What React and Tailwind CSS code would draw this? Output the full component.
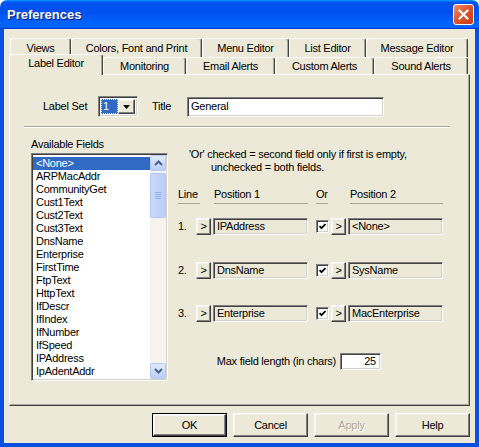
import React from "react";

const sunken =
  "border border-t-[#808080] border-l-[#808080] border-b-white border-r-white shadow-[inset_1px_1px_0_#404040,inset_-1px_-1px_0_#d4d0c8]";
const raised =
  "border border-t-white border-l-white border-b-[#404040] border-r-[#404040] shadow-[inset_-1px_-1px_0_#808080,inset_1px_1px_0_#f4f3ee]";

const fields = [
  "<None>",
  "ARPMacAddr",
  "CommunityGet",
  "Cust1Text",
  "Cust2Text",
  "Cust3Text",
  "DnsName",
  "Enterprise",
  "FirstTime",
  "FtpText",
  "HttpText",
  "IfDescr",
  "IfIndex",
  "IfNumber",
  "IfSpeed",
  "IPAddress",
  "IpAdentAddr",
  "IpAdentIfIndex",
];

const row1 = [
  ["Views", 61],
  ["Colors, Font and Print", 131],
  ["Menu Editor", 87],
  ["List Editor", 77],
  ["Message Editor", 102],
];

const row2 = [
  ["Label Editor", 94, true],
  ["Monitoring", 83],
  ["Email Alerts", 89],
  ["Custom Alerts", 99],
  ["Sound Alerts", 94],
];

const lines = [
  ["1.", "IPAddress", "<None>"],
  ["2.", "DnsName", "SysName"],
  ["3.", "Enterprise", "MacEnterprise"],
];

function Chevron({ down }) {
  return (
    <svg width="9" height="6" viewBox="0 0 9 6">
      <polyline
        points={down ? "1,1 4.5,4.5 8,1" : "1,5 4.5,1.5 8,5"}
        fill="none"
        stroke="#4d6185"
        strokeWidth="2"
      />
    </svg>
  );
}

function ScrollBar() {
  const btn =
    "h-[16px] rounded-[2px] border border-[#b4c8f6] bg-[linear-gradient(to_bottom,#e1eafe,#b9cdfa)] flex items-center justify-center";
  return (
    <div className="w-[16px] h-full bg-[#f4f3ee] flex flex-col">
      <div className={btn}>
        <Chevron />
      </div>
      <div className="mt-[2px] h-[45px] rounded-[2px] border border-[#b4c8f6] bg-[linear-gradient(to_right,#c9d8fc,#bacdf9)] flex flex-col items-center justify-center gap-[1px]">
        <div className="w-[6px] h-[1px] bg-[#8cb0f8]" />
        <div className="w-[6px] h-[1px] bg-[#8cb0f8]" />
        <div className="w-[6px] h-[1px] bg-[#8cb0f8]" />
        <div className="w-[6px] h-[1px] bg-[#8cb0f8]" />
      </div>
      <div className="flex-1" />
      <div className={btn}>
        <Chevron down />
      </div>
    </div>
  );
}

function Arrow() {
  return (
    <div className={`w-[15px] h-[17px] ${raised} bg-[#ece9d8] flex items-center justify-center leading-none`}>
      &gt;
    </div>
  );
}

function Field({ text }) {
  return (
    <div className={`w-[95px] h-[17px] ${sunken} bg-[#ece9d8] flex items-center pl-[3px]`}>
      {text}
    </div>
  );
}

function Check() {
  return (
    <div className={`w-[13px] h-[13px] ${sunken} bg-white flex items-center justify-center`}>
      <svg width="7" height="7" viewBox="0 0 7 7">
        <polyline points="0.5,3 2.5,5.2 6.5,1" fill="none" stroke="#000" strokeWidth="1.8" />
      </svg>
    </div>
  );
}

function Button({ label, def, disabled }) {
  return (
    <div className={`w-[75px] h-[24px] ${def ? "border border-black" : ""}`}>
      <div
        className={`w-full h-full ${raised} bg-[#ece9d8] flex items-center justify-center ${
          disabled ? "text-[#aca899] [text-shadow:1px_1px_0_#fff]" : "text-black"
        }`}
      >
        {label}
      </div>
    </div>
  );
}

export default function App() {
  return (
    <div className="w-[479px] h-[447px] flex flex-col bg-white font-['Liberation_Sans',Arial,sans-serif] text-[11px] leading-[13px] tracking-[-0.25px] text-black">
      {/* title bar */}
      <div className="h-[29px] rounded-t-[7px] bg-[linear-gradient(to_bottom,#0997ff_0%,#0053ee_8%,#0050ee_40%,#0066ff_88%,#0066ff_93%,#005bff_95%,#003dd7_96%,#003dd7_100%)] flex items-center justify-between pl-[7px] pr-[5px]">
        <span className="text-white font-bold text-[13px] tracking-normal [text-shadow:1px_1px_0_#0a1883]">
          Preferences
        </span>
        <div className="w-[21px] h-[21px] rounded-[3px] border border-white bg-[linear-gradient(135deg,#f0916f,#e2552e_45%,#c43b12)] flex items-center justify-center">
          <svg width="11" height="11" viewBox="0 0 11 11">
            <path d="M1.5 1.5 L9.5 9.5 M9.5 1.5 L1.5 9.5" stroke="#fff" strokeWidth="2.2" strokeLinecap="square" />
          </svg>
        </div>
      </div>

      {/* body */}
      <div className="flex-1 bg-[#ece9d8] border-x-4 border-b-4 border-[#0b4fe0] flex flex-col pl-[5px] pt-[9px]">
        {/* tabs back row */}
        <div className="flex h-[19px] ml-[1px]">
          {row1.map(([t, w]) => (
            <div
              key={t}
              style={{ width: w }}
              className="h-[19px] shrink-0 rounded-t-[3px] border-t border-l border-white border-r border-r-[#404040] shadow-[inset_-1px_0_0_#aca899] bg-[#ece9d8] flex items-center justify-center"
            >
              {t}
            </div>
          ))}
        </div>
        {/* tabs front row */}
        <div className="flex items-start h-[20px] -mt-[3px] relative z-10">
          {row2.map(([t, w, sel]) =>
            sel ? (
              <div
                key={t}
                style={{ width: w }}
                className="h-[21px] shrink-0 rounded-t-[3px] border-t border-l border-white border-r border-r-[#404040] shadow-[inset_-1px_0_0_#aca899] bg-[#ece9d8] flex justify-center pt-[2px]"
              >
                {t}
              </div>
            ) : (
              <div
                key={t}
                style={{ width: w }}
                className="mt-[3px] h-[17px] shrink-0 rounded-t-[3px] border-t border-l border-white border-r border-r-[#404040] shadow-[inset_-1px_0_0_#aca899] bg-[#ece9d8] flex items-center justify-center"
              >
                {t}
              </div>
            )
          )}
        </div>

        {/* panel */}
        <div className="w-[461px] h-[332px] border border-t-white border-l-white border-r-[#404040] border-b-[#404040] shadow-[inset_-1px_-1px_0_#aca899] flex flex-col">
          <div className="flex items-center h-[21px] mt-[21px] ml-[33px]">
            <span className="w-[55px]">Label Set</span>
            <div className={`w-[40px] h-[21px] ${sunken} bg-white flex p-[2px]`}>
              <div className="flex-1 bg-[#316ac5] text-white flex items-center pl-[2px] outline-1 outline-dotted outline-[#ece9d8] -outline-offset-1">
                1
              </div>
              <div className={`w-[17px] ${raised} bg-[#ece9d8] flex items-center justify-center`}>
                <svg width="7" height="4" viewBox="0 0 7 4">
                  <polygon points="0,0 7,0 3.5,4" fill="#000" />
                </svg>
              </div>
            </div>
            <span className="ml-[14px] w-[35px]">Title</span>
            <div className={`w-[197px] h-[20px] ${sunken} bg-white flex items-center pl-[3px]`}>
              General
            </div>
          </div>

          <div className="mt-[9px] ml-[14px] w-[426px] h-[2px] border-t border-t-[#aca899] border-b border-b-white" />

          <div className="flex items-start">
            {/* available fields */}
            <div className="ml-[21px] mt-[10px] flex flex-col">
              <span>Available Fields</span>
              <div className={`mt-[2px] w-[137px] h-[228px] ${sunken} bg-white flex p-[1px]`}>
                <div className="flex-1 overflow-hidden pt-[2px]">
                  {fields.map((f, i) => (
                    <div
                      key={f}
                      className={`h-[13px] pl-[3px] whitespace-nowrap ${
                        i === 0 ? "bg-[#316ac5] text-white" : ""
                      }`}
                    >
                      {f}
                    </div>
                  ))}
                </div>
                <ScrollBar />
              </div>
            </div>

            {/* lines */}
            <div className="ml-[10px] mt-[20px] flex flex-col">
              <span className="ml-[11px]">
                'Or' checked = second field only if first is empty,
              </span>
              <span className="ml-[33px]">unchecked = both fields.</span>

              <div className="flex mt-[14px]">
                <span className="w-[22px] h-[16px] border-b border-[#aca899]">Line</span>
                <span className="ml-[14px] w-[94px] h-[16px] border-b border-[#aca899]">Position 1</span>
                <span className="ml-[8px] w-[12px] h-[16px] border-b border-[#aca899]">Or</span>
                <span className="ml-[22px] w-[93px] h-[16px] border-b border-[#aca899]">Position 2</span>
              </div>

              {lines.map(([n, a, b], i) => (
                <div
                  key={n}
                  className={`flex items-center h-[17px] ${
                    i === 0 ? "mt-[14px]" : i === 1 ? "mt-[27px]" : "mt-[26px]"
                  }`}
                >
                  <span className="w-[18px]">{n}</span>
                  <Arrow />
                  <div className="ml-[2px]">
                    <Field text={a} />
                  </div>
                  <div className="ml-[8px]">
                    <Check />
                  </div>
                  <div className="ml-[2px]">
                    <Arrow />
                  </div>
                  <div className="ml-[2px]">
                    <Field text={b} />
                  </div>
                </div>
              ))}

              <div className="flex items-center justify-end mt-[31px] w-[203px]">
                <span className="whitespace-nowrap mr-[4px]">Max field length (in chars)</span>
                <div className={`w-[41px] h-[17px] ${sunken} bg-white flex items-center justify-end pr-[4px]`}>
                  25
                </div>
              </div>
            </div>
          </div>
        </div>

        {/* dialog buttons */}
        <div className="flex justify-end gap-[6px] pr-[5px] mt-[7px]">
          <Button label="OK" def />
          <Button label="Cancel" />
          <Button label="Apply" disabled />
          <Button label="Help" />
        </div>
      </div>
    </div>
  );
}
